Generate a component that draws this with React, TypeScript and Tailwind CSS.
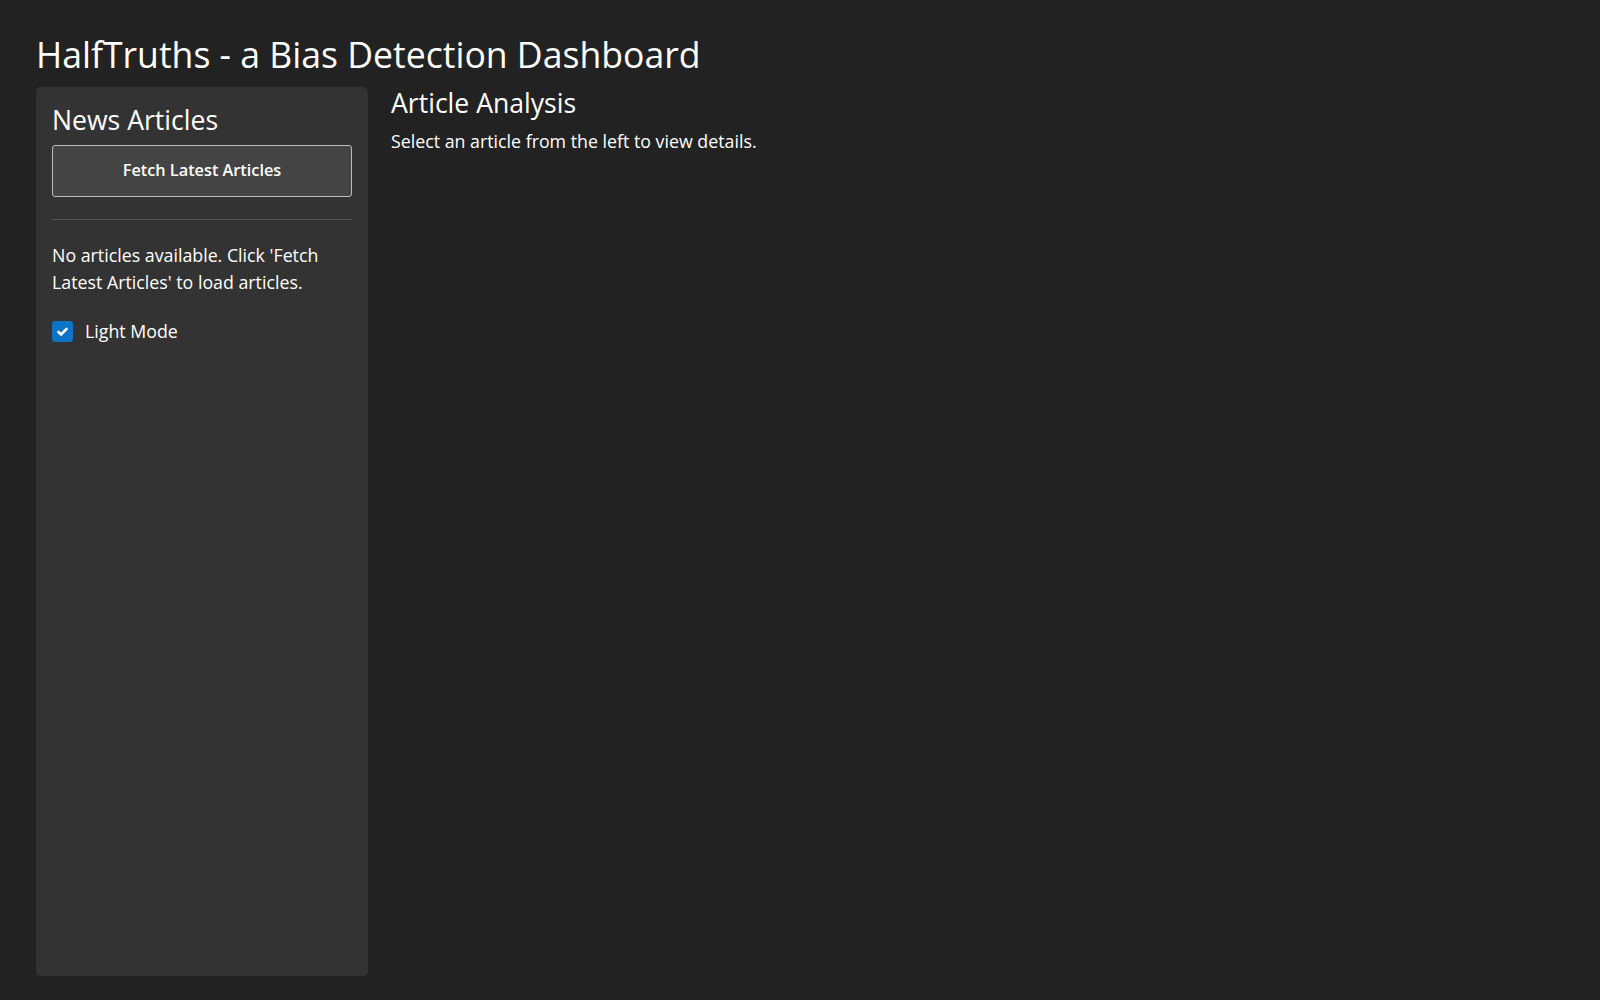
import React, { useState } from 'react';

export default function App() {
  const [lightMode, setLightMode] = useState(true);

  return (
    <div
      className="h-screen flex flex-col bg-[#222222] text-white pt-[33px] pb-[24px] px-[36px]"
      style={{ fontFamily: '"Open Sans", "Noto Sans", sans-serif' }}
    >
      <h1 className="text-[35.6px] leading-[1.2] font-normal">HalfTruths - a Bias Detection Dashboard</h1>

      <div className="flex flex-1 gap-[23px] mt-[11px] min-h-0">
        {/* sidebar */}
        <div className="w-[332px] shrink-0 bg-[#333333] rounded-[5px] px-4 pt-[18px]">
          <h2 className="text-[26.6px] leading-[1.2] font-normal">News Articles</h2>
          <button className="mt-[8px] w-full h-[52px] bg-[#444444] border border-[#bdbdbd] rounded-[3px] text-[16.3px] font-semibold text-white">
            Fetch Latest Articles
          </button>
          <hr className="mt-[22px] border-0 border-t border-[#555555]" />
          <p className="mt-[22px] text-[17.8px] leading-[27px]">
            No articles available. Click 'Fetch Latest Articles' to load articles.
          </p>
          <label className="mt-[22px] flex items-center gap-[12px] text-[17.8px] leading-[27px] cursor-pointer">
            <span
              className={
                lightMode
                  ? 'w-[21px] h-[21px] rounded-[3px] bg-[#0b74c4] flex items-center justify-center'
                  : 'w-[21px] h-[21px] rounded-[3px] bg-white border border-[#888] flex items-center justify-center'
              }
              onClick={() => setLightMode(!lightMode)}
            >
              {lightMode && (
                <svg width="13" height="13" viewBox="0 0 16 16" fill="none">
                  <path d="M3 8.5l3.2 3.2L13 4.8" stroke="white" strokeWidth="3.2" strokeLinecap="round" strokeLinejoin="round" />
                </svg>
              )}
            </span>
            <span>Light Mode</span>
          </label>
        </div>

        {/* main */}
        <div className="flex-1 pt-[1px]">
          <h2 className="text-[26.6px] leading-[1.2] font-normal">Article Analysis</h2>
          <p className="mt-[8px] text-[17.8px] leading-[27px]">Select an article from the left to view details.</p>
        </div>
      </div>
    </div>
  );
}
